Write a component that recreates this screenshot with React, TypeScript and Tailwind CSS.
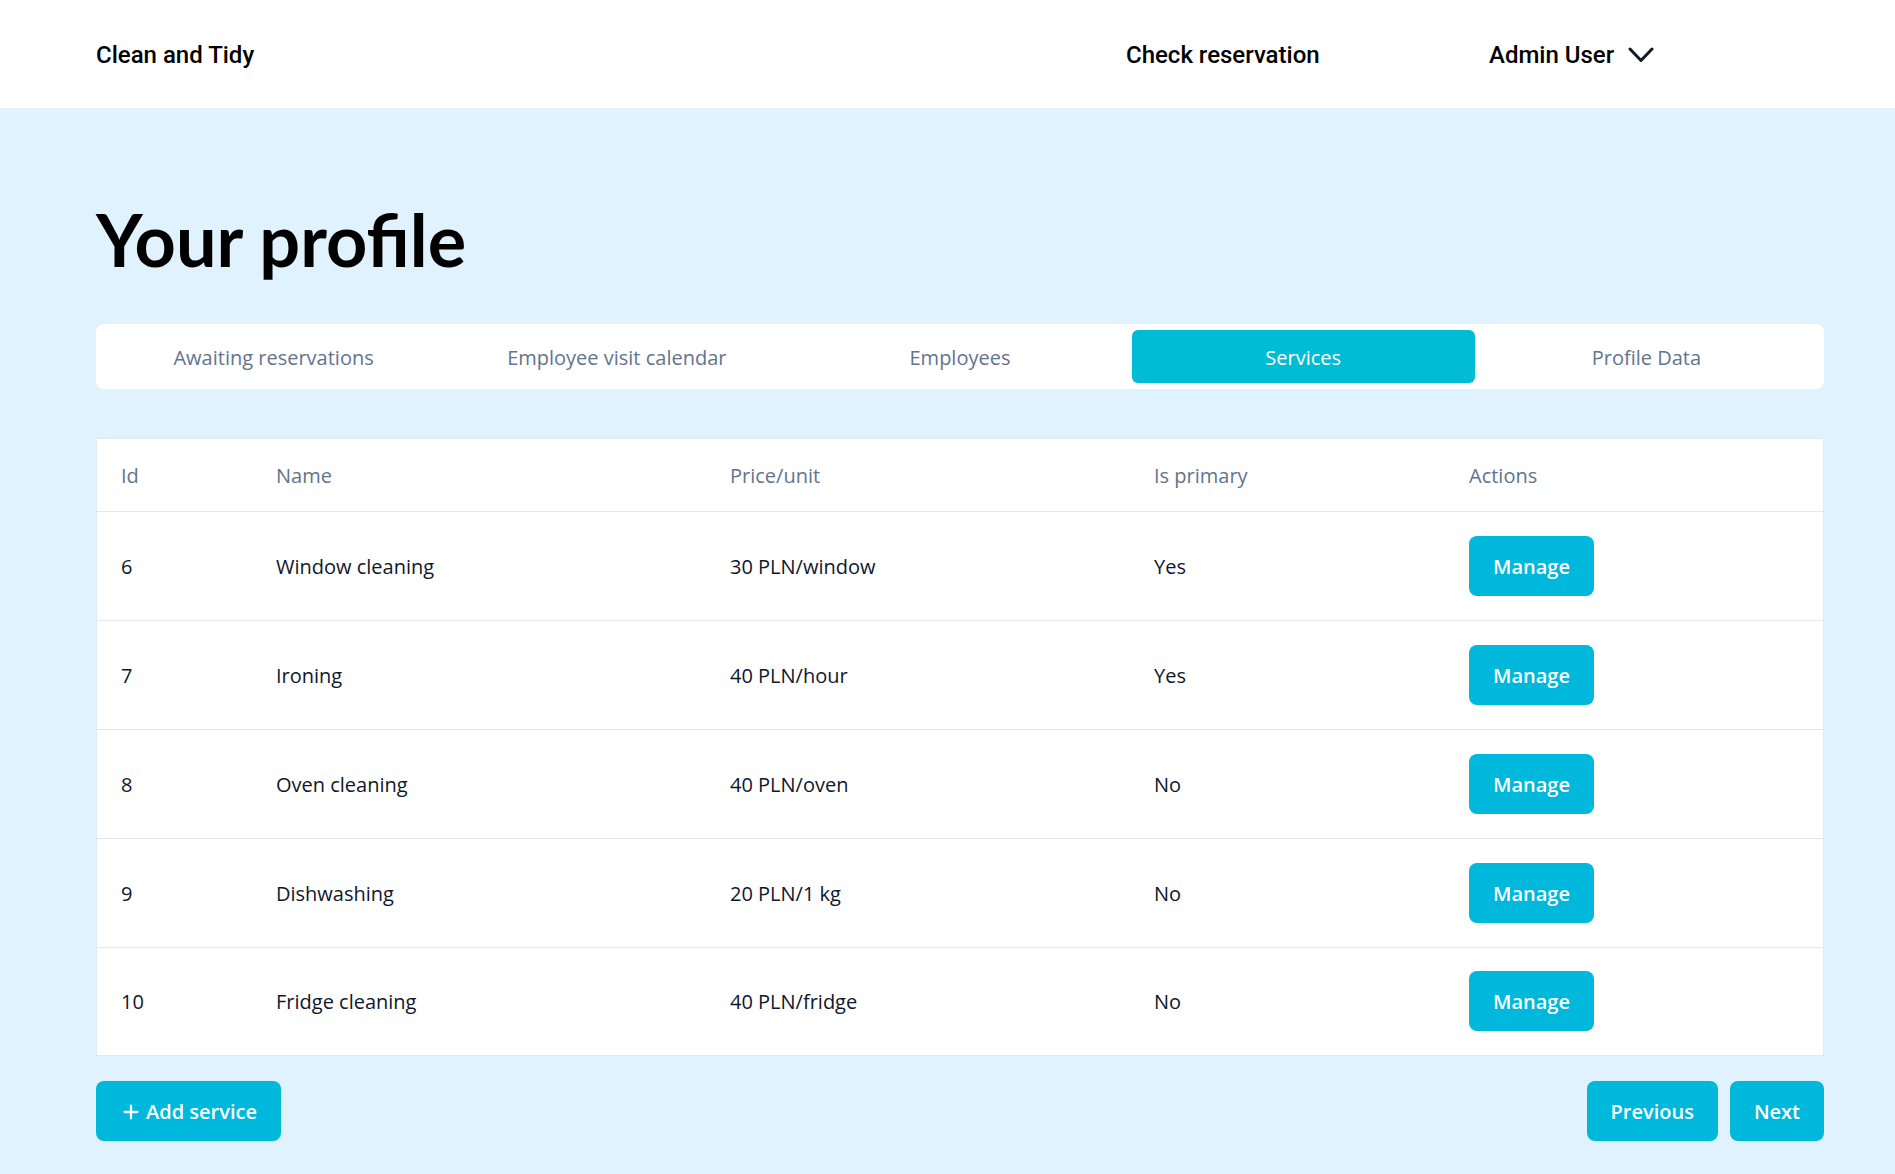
import { Plus } from "lucide-react";

const tabs = [
  "Awaiting reservations",
  "Employee visit calendar",
  "Employees",
  "Services",
  "Profile Data",
];

const services = [
  { id: 6, name: "Window cleaning", price: "30 PLN/window", primary: true },
  { id: 7, name: "Ironing", price: "40 PLN/hour", primary: true },
  { id: 8, name: "Oven cleaning", price: "40 PLN/oven", primary: false },
  { id: 9, name: "Dishwashing", price: "20 PLN/1 kg", primary: false },
  { id: 10, name: "Fridge cleaning", price: "40 PLN/fridge", primary: false },
];

const headers = ["Id", "Name", "Price/unit", "Is primary", "Actions"];

const Navbar = () => {
  return (
    <header className="h-[108px] bg-white flex items-center pt-[2px] pl-[96px] pr-[71px] font-['Roboto',sans-serif] text-black">
      <div className="text-[24px] font-medium">Clean and Tidy</div>
      <div className="ml-auto flex items-center">
        <div className="w-[363px] text-[24px] font-medium">Check reservation</div>
        <div className="w-[335px] flex items-center text-[24px] font-medium">
          Admin User
          <svg
            width="26"
            height="16"
            viewBox="0 0 26 16"
            className="ml-[14px]"
            fill="none"
            stroke="#111827"
            strokeWidth="3"
            strokeLinecap="round"
            strokeLinejoin="round"
          >
            <polyline points="2,2 13,13.5 24,2" />
          </svg>
        </div>
      </div>
    </header>
  );
};

const App = () => {
  const activeTab = "Services";

  return (
    <div className="min-h-screen bg-sky-100 font-['Open_Sans',sans-serif]">
      <Navbar />

      <main className="pl-[96px] pr-[71px] pb-[33px]">
        {/* Title */}
        <h1 className="mt-[95px] text-[72px] leading-none font-bold text-black font-['Lato',sans-serif]">
          Your profile
        </h1>

        {/* Tabs */}
        <div className="mt-[49px] h-[65px] bg-white rounded-lg p-1.5 grid grid-cols-5">
          {tabs.map((tab) => (
            <button
              key={tab}
              className={
                tab === activeTab
                  ? "rounded-md pt-[2px] bg-[#00bcd4] text-white text-xl font-medium"
                  : "rounded-md pt-[2px] text-slate-500 text-xl font-medium"
              }
            >
              {tab}
            </button>
          ))}
        </div>

        {/* Table */}
        <div className="mt-[49px] bg-white border border-slate-200">
          <table className="w-full table-fixed text-xl">
            <colgroup>
              <col className="w-[155px]" />
              <col className="w-[454px]" />
              <col className="w-[424px]" />
              <col className="w-[315px]" />
              <col />
            </colgroup>
            <thead>
              <tr className="h-[72px] border-b border-slate-200">
                {headers.map((header) => (
                  <th
                    key={header}
                    className="px-6 pt-[3px] text-left font-normal text-slate-500"
                  >
                    {header}
                  </th>
                ))}
              </tr>
            </thead>
            <tbody>
              {services.map((service, index) => (
                <tr
                  key={service.id}
                  className={
                    index < services.length - 1
                      ? "h-[109px] border-b border-slate-200 text-slate-900"
                      : "h-[108px] text-slate-900"
                  }
                >
                  <td className="px-6 pt-[2px]">{service.id}</td>
                  <td className="px-6 pt-[2px]">{service.name}</td>
                  <td className="px-6 pt-[2px]">{service.price}</td>
                  <td className="px-6 pt-[2px]">{service.primary ? "Yes" : "No"}</td>
                  <td className="px-6">
                    <button className="h-[60px] px-6 pt-[2px] rounded-lg bg-cyan-500 text-white font-semibold">
                      Manage
                    </button>
                  </td>
                </tr>
              ))}
            </tbody>
          </table>
        </div>

        {/* Footer buttons */}
        <div className="mt-[25px] flex items-center">
          <button className="h-[60px] px-6 pt-[2px] rounded-lg bg-cyan-500 text-white text-xl font-semibold flex items-center gap-1">
            <Plus size={22} strokeWidth={2.5} />
            Add service
          </button>
          <div className="ml-auto flex gap-3">
            <button className="h-[60px] px-6 pt-[2px] rounded-lg bg-cyan-500 text-white text-xl font-semibold">
              Previous
            </button>
            <button className="h-[60px] px-6 pt-[2px] rounded-lg bg-cyan-500 text-white text-xl font-semibold">
              Next
            </button>
          </div>
        </div>
      </main>
    </div>
  );
};

export default App;
